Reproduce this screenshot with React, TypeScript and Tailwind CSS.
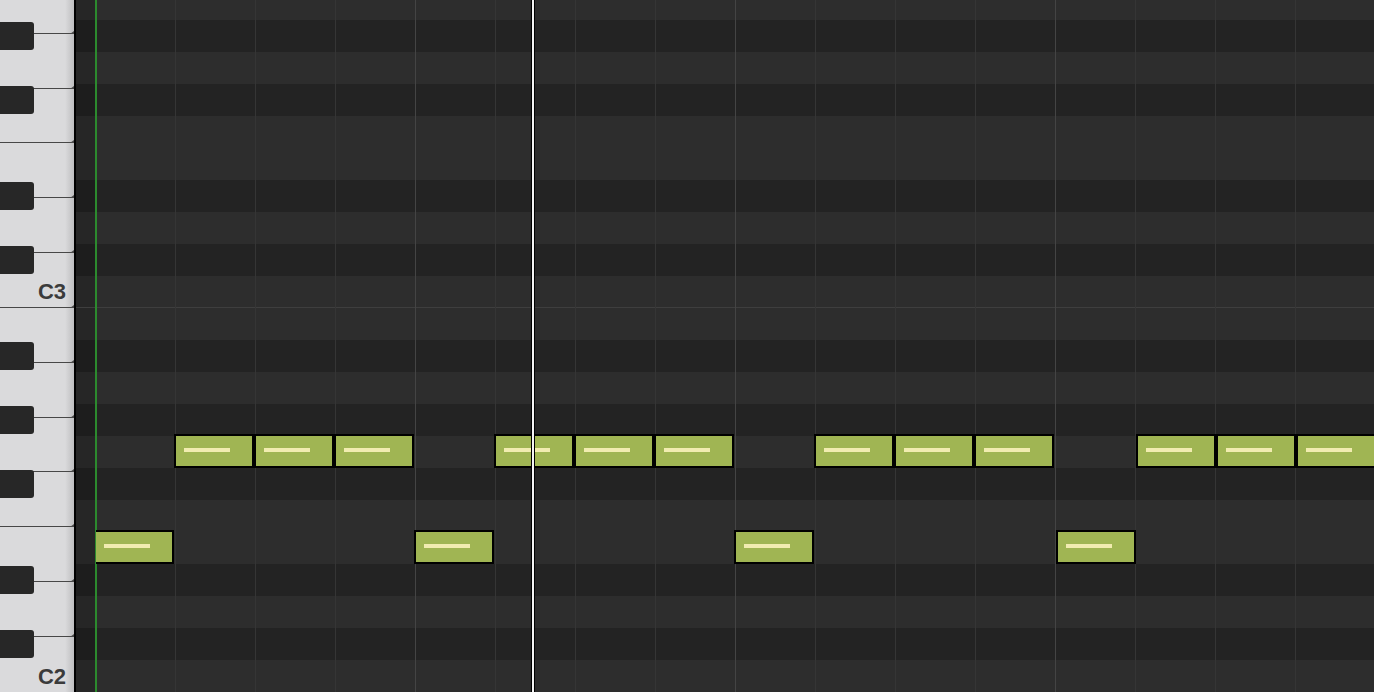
import React from "react"

// piano roll rows, top to bottom; first row is cut by the window
const rows = [
  "A3", "G#3", "G3", "F#3", "F3", "E3", "D#3", "D3", "C#3", "C3",
  "B2", "A#2", "A2", "G#2", "G2", "F#2", "F2", "E2", "D#2", "D2", "C#2", "C2",
]

const whiteKeys = ["A3", "G3", "F3", "E3", "D3", "C3", "B2", "A2", "G2", "F2", "E2", "D2", "C2"]

const rowTop = (name: string) => {
  const i = rows.indexOf(name)
  return i === 0 ? 0 : 20 + (i - 1) * 32
}

// note = [row, beat]
const notes: [string, number][] = [
  ["E2", 0], ["G2", 1], ["G2", 2], ["G2", 3],
  ["E2", 4], ["G2", 5], ["G2", 6], ["G2", 7],
  ["E2", 8], ["G2", 9], ["G2", 10], ["G2", 11],
  ["E2", 12], ["G2", 13], ["G2", 14], ["G2", 15],
]

function Keyboard() {
  return (
    <div className="relative h-full w-[74px] shrink-0 overflow-hidden bg-[#d9d9db]">
      <div className="flex flex-col -mt-[21.14px]">
        {whiteKeys.map((k, i) => (
          <div
            key={k}
            className={
              "relative flex h-[54.857px] shrink-0 items-end justify-end bg-[linear-gradient(to_right,#dadadc_88%,#bebec0)] pr-[8px] pb-[4px] " +
              (i < whiteKeys.length - 1 ? "border-b border-[#474747]" : "")
            }
          >
            {(k === "C3" || k === "C2") && (
              <span className="font-['Liberation_Sans',Arial,sans-serif] text-[22px] font-bold leading-none text-[#3b3b3b]">
                {k}
              </span>
            )}
            {i < whiteKeys.length - 1 && (
              <span className="absolute right-0 -bottom-[4px] h-0 w-0 border-y-[3px] border-r-[4px] border-y-transparent border-r-[#4a4a4a]" />
            )}
          </div>
        ))}
      </div>
      <div className="absolute inset-0 flex flex-col">
        {rows.map((r, i) => (
          <div key={r} className={i === 0 ? "h-[20px] shrink-0" : "flex h-[32px] shrink-0 items-center"}>
            {r.includes("#") && <div className="h-[28px] w-[34px] rounded-r-[3px] bg-[#272727]" />}
          </div>
        ))}
      </div>
    </div>
  )
}

function Grid() {
  return (
    <div className="relative h-full flex-1 overflow-hidden">
      <div className="flex flex-col">
        {rows.map((r, i) => {
          const black = r.includes("#")
          return (
            <div
              key={r}
              className={
                "flex shrink-0 " +
                (i === 0 ? "h-[20px] " : "h-[32px] ") +
                (r === "C3" ? "border-b border-[#3e3e3e]" : "")
              }
            >
              <div className={"w-[19px] shrink-0 " + (black ? "bg-[#1d1d1d]" : "bg-[#262626]")} />
              <div className={"flex-1 " + (black ? "bg-[#232323]" : "bg-[#2d2d2d]")} />
            </div>
          )
        })}
      </div>

      {/* beat lines */}
      <div className="absolute inset-y-0 left-[19px] flex">
        {Array.from({ length: 17 }).map((_, k) => (
          <div
            key={k}
            className={
              "h-full w-[80px] shrink-0 " +
              (k === 0
                ? "border-l-2 border-[#2c8a2e]"
                : k % 4 === 0
                  ? "border-l border-[#444444]"
                  : "border-l border-[#353535]")
            }
          />
        ))}
      </div>

      {/* notes */}
      <div className="absolute inset-y-0 left-[20px] right-0 overflow-hidden">
        {notes.map(([row, beat], i) => (
          <div
            key={i}
            className="absolute flex h-[34px] w-[80px] border-2 border-black bg-[#a0b553] pt-[12px] pl-[8px]"
            style={{ left: -2 + beat * 80 + (beat >= 12 ? 2 : 0), top: rowTop(row) - 2 }}
          >
            <div className="h-[4px] w-[46px] bg-[#f1ecb0]" />
          </div>
        ))}
      </div>

      {/* playhead */}
      <div className="absolute inset-y-0 left-[455px] w-[4px] border-x border-black bg-[#f4f4f4]" />
    </div>
  )
}

export default function App() {
  return (
    <div className="flex h-[692px] w-[1374px] overflow-hidden bg-[#2d2d2d]">
      <Keyboard />
      <div className="h-full w-[2px] shrink-0 bg-black" />
      <Grid />
    </div>
  )
}
